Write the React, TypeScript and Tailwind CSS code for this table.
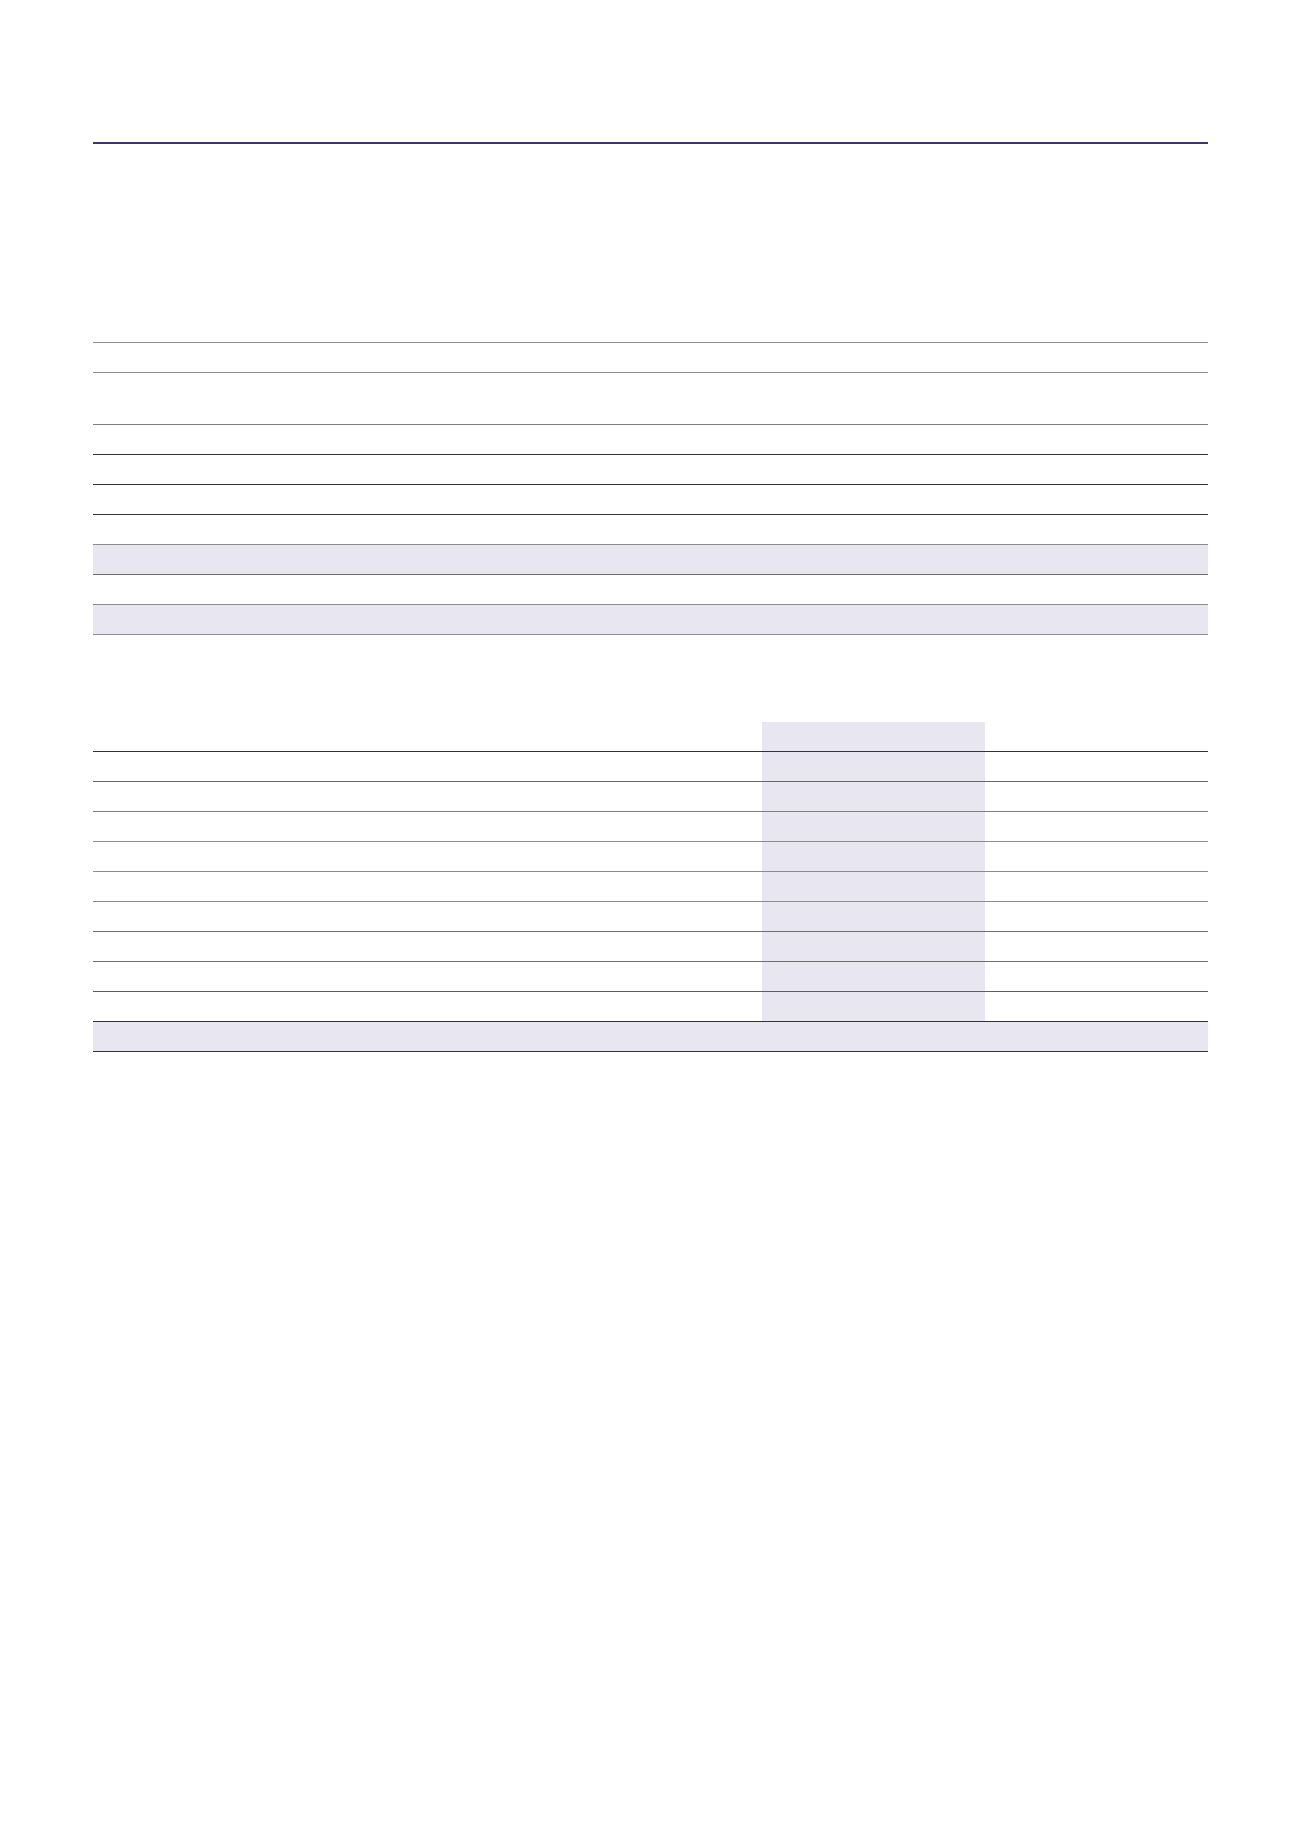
type Row = { h: string; line: string; shade?: boolean; bandShade?: boolean };

const firstCols = ["w-[353px]", "w-[93px]", "w-[93px]", "w-[93px]", "w-[92px]", "w-[93px]", "w-[93px]", "w-[93px]", "w-[112px]"];
const secondCols = ["w-[669px]", "w-[111px]", "w-[112px]", "w-[111px]", "w-[112px]"];

// rows of the upper table: height includes the 1px bottom rule
const firstRows: Row[] = [
  { h: "h-[30px]", line: "border-[#8c8c8c]" },
  { h: "h-[52px]", line: "border-[#7e7e7e]" },
  { h: "h-[30px]", line: "border-[#333333]" },
  { h: "h-[30px]", line: "border-[#333333]" },
  { h: "h-[30px]", line: "border-[#333333]" },
  { h: "h-[30px]", line: "border-[#8c8c8c]" },
  { h: "h-[30px]", line: "border-[#6e6e6e]", shade: true },
  { h: "h-[30px]", line: "border-[#8c8c8c]" },
  { h: "h-[30px]", line: "border-[#8c8c8c]", shade: true },
];

const secondRows: Row[] = [
  { h: "h-[30px]", line: "border-[#333333]", bandShade: true },
  { h: "h-[30px]", line: "border-[#666666]", bandShade: true },
  { h: "h-[30px]", line: "border-[#7e7e7e]", bandShade: true },
  { h: "h-[30px]", line: "border-[#8c8c8c]", bandShade: true },
  { h: "h-[30px]", line: "border-[#8c8c8c]", bandShade: true },
  { h: "h-[30px]", line: "border-[#8c8c8c]", bandShade: true },
  { h: "h-[30px]", line: "border-[#6e6e6e]", bandShade: true },
  { h: "h-[30px]", line: "border-[#6e6e6e]", bandShade: true },
  { h: "h-[30px]", line: "border-[#5e5e5e]", bandShade: true },
  { h: "h-[30px]", line: "border-[#333333]", shade: true },
];

function FirstTable() {
  return (
    <div className="border-t border-[#8c8c8c]">
      {firstRows.map((r, i) => (
        <div key={i} className={`flex border-b ${r.line} ${r.h} ${r.shade ? "bg-[#e7e6f1]" : ""}`}>
          {firstCols.map((c, j) => (
            <div key={j} className={`${c} h-full`} />
          ))}
        </div>
      ))}
    </div>
  );
}

function SecondTable() {
  return (
    <div>
      {/* header row, only the highlighted band is tinted */}
      <div className="flex h-[29px]">
        {secondCols.map((c, j) => (
          <div key={j} className={`${c} h-full ${j === 1 || j === 2 ? "bg-[#e7e6f1]" : ""}`} />
        ))}
      </div>
      {secondRows.map((r, i) => (
        <div key={i} className={`flex border-t ${r.line} h-[30px] ${r.shade ? "bg-[#e7e6f1]" : ""}`}>
          {secondCols.map((c, j) => (
            <div key={j} className={`${c} h-full ${r.bandShade && (j === 1 || j === 2) ? "bg-[#e7e6f1]" : ""}`} />
          ))}
        </div>
      ))}
      <div className="border-t border-[#333333]" />
    </div>
  );
}

export default function App() {
  return (
    <div className="min-h-[1839px] w-[1300px] bg-white font-['Liberation_Sans',sans-serif]">
      <div className="ml-[93px] w-[1115px] pt-[142px]">
        <div className="h-[2px] bg-[#3b3572]" />
        <div className="mt-[198px]">
          <FirstTable />
        </div>
        <div className="mt-[87px]">
          <SecondTable />
        </div>
      </div>
    </div>
  );
}
